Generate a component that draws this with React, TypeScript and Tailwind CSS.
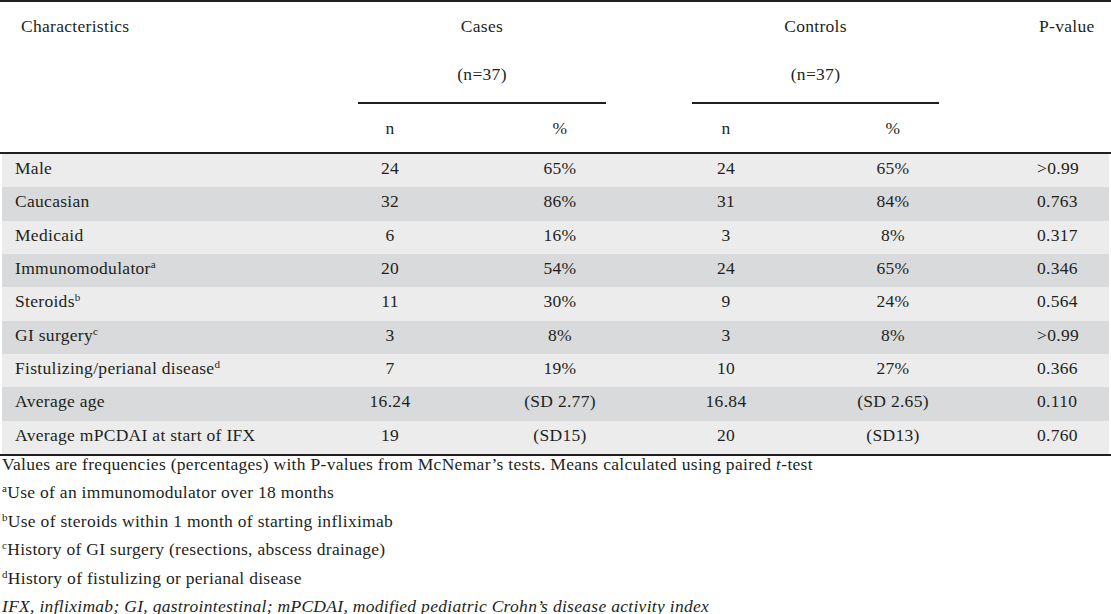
const rows = [
  { label: "Male", sup: "", cn: "24", cp: "65%", kn: "24", kp: "65%", p: ">0.99" },
  { label: "Caucasian", sup: "", cn: "32", cp: "86%", kn: "31", kp: "84%", p: "0.763" },
  { label: "Medicaid", sup: "", cn: "6", cp: "16%", kn: "3", kp: "8%", p: "0.317" },
  { label: "Immunomodulator", sup: "a", cn: "20", cp: "54%", kn: "24", kp: "65%", p: "0.346" },
  { label: "Steroids", sup: "b", cn: "11", cp: "30%", kn: "9", kp: "24%", p: "0.564" },
  { label: "GI surgery", sup: "c", cn: "3", cp: "8%", kn: "3", kp: "8%", p: ">0.99" },
  { label: "Fistulizing/perianal disease", sup: "d", cn: "7", cp: "19%", kn: "10", kp: "27%", p: "0.366" },
  { label: "Average age", sup: "", cn: "16.24", cp: "(SD 2.77)", kn: "16.84", kp: "(SD 2.65)", p: "0.110" },
  { label: "Average mPCDAI at start of IFX", sup: "", cn: "19", cp: "(SD15)", kn: "20", kp: "(SD13)", p: "0.760" },
];

const notes = [
  { sup: "a", text: "Use of an immunomodulator over 18 months" },
  { sup: "b", text: "Use of steroids within 1 month of starting infliximab" },
  { sup: "c", text: "History of GI surgery (resections, abscess drainage)" },
  { sup: "d", text: "History of fistulizing or perianal disease" },
];

const cols = "grid grid-cols-[298px_180px_160px_172px_162px_1fr]";

function Sup({ children }: { children: string }) {
  return <span className="text-[11px] relative -top-[6px] leading-none">{children}</span>;
}

export default function App() {
  return (
    <div className="w-[1111px] min-h-[614px] bg-white text-[#231f20] text-[17.5px] tracking-[0.3px] font-['Liberation_Serif','Times_New_Roman',serif]">
      <div className="h-[2px] bg-[#231f20]" />

      {/* header */}
      <div className="grid grid-cols-[358px_248px_86px_247px_1fr]">
        <div className="h-[48px] flex items-center pl-[21px]">Characteristics</div>
        <div className="h-[48px] flex items-center justify-center">Cases</div>
        <div />
        <div className="h-[48px] flex items-center justify-center">Controls</div>
        <div className="h-[48px] flex items-center pl-[100px]">P-value</div>

        <div />
        <div className="h-[48px] flex items-center justify-center">(n=37)</div>
        <div />
        <div className="h-[48px] flex items-center justify-center">(n=37)</div>
        <div />

        <div />
        <div className="mt-[4px] h-[2px] bg-[#231f20]" />
        <div />
        <div className="mt-[4px] h-[2px] bg-[#231f20]" />
        <div />
      </div>
      <div className={`${cols} mx-[2px] h-[48px] items-center text-center`}>
        <div />
        <div>n</div>
        <div>%</div>
        <div>n</div>
        <div>%</div>
        <div />
      </div>
      <div className="h-[2px] bg-[#231f20]" />

      {/* body */}
      <div className="mx-[2px]">
        {rows.map((r, i) => (
          <div
            key={r.label}
            className={`${cols} h-[33.33px] pb-[5px] items-center text-center ${i % 2 === 0 ? "bg-[#ececec]" : "bg-[#d9dadb]"}`}
          >
            <div className="text-left pl-[13px] whitespace-nowrap">
              {r.label}
              {r.sup && <Sup>{r.sup}</Sup>}
            </div>
            <div>{r.cn}</div>
            <div>{r.cp}</div>
            <div>{r.kn}</div>
            <div>{r.kp}</div>
            <div className="text-left pl-[63px]">{r.p}</div>
          </div>
        ))}
      </div>
      <div className="h-[2px] bg-[#231f20]" />

      {/* footnotes */}
      <div className="-mt-[6px] pl-[2px] flex flex-col">
        <p className="h-[28.4px] flex items-center whitespace-nowrap">
          <span>
            Values are frequencies (percentages) with P-values from McNemar’s tests. Means calculated using paired{" "}
            <i>t</i>-test
          </span>
        </p>
        {notes.map((n) => (
          <p key={n.sup} className="h-[28.4px] flex items-center whitespace-nowrap">
            <span>
              <Sup>{n.sup}</Sup>
              {n.text}
            </span>
          </p>
        ))}
        <p className="h-[28.4px] flex items-center whitespace-nowrap italic">
          IFX, infliximab; GI, gastrointestinal; mPCDAI, modified pediatric Crohn’s disease activity index
        </p>
      </div>
    </div>
  );
}
